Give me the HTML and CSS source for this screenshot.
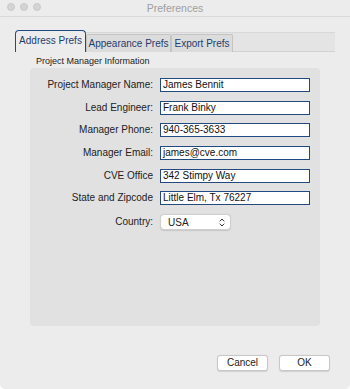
FILE: index.html
```html
<!DOCTYPE html>
<html>
<head>
<meta charset="utf-8">
<link rel="stylesheet" href="styles.css">
</head>
<body>
<div class="window">
  <div class="titlebar">
    <div class="lights"><span class="light"></span><span class="light"></span><span class="light"></span></div>
    <div class="title">Preferences</div>
  </div>
  <div class="tabstrip">
    <div class="tab active">Address Prefs</div>
    <div class="tab">Appearance Prefs</div>
    <div class="tab">Export Prefs</div>
  </div>
  <div class="section-label">Project Manager Information</div>
  <div class="group">
    <div class="form">
      <label class="lbl">Project Manager Name:</label><div class="field">James Bennit</div>
      <label class="lbl">Lead Engineer:</label><div class="field">Frank Binky</div>
      <label class="lbl">Manager Phone:</label><div class="field">940-365-3633</div>
      <label class="lbl">Manager Email:</label><div class="field">james@cve.com</div>
      <label class="lbl">CVE Office</label><div class="field">342 Stimpy Way</div>
      <label class="lbl">State and Zipcode</label><div class="field">Little Elm, Tx 76227</div>
      <label class="lbl">Country:</label>
      <div class="select"><span>USA</span>
        <svg class="chev" width="6" height="9" viewBox="0 0 6 9"><path d="M0.8 3.3 L3 1 L5.2 3.3 M0.8 5.7 L3 8 L5.2 5.7" fill="none" stroke="#333" stroke-width="1"/></svg>
      </div>
    </div>
  </div>
  <div class="buttons">
    <div class="btn">Cancel</div>
    <div class="btn">OK</div>
  </div>
</div>
</body>
</html>
```
FILE: styles.css
```css
html, body {
  margin: 0;
  padding: 0;
  background: #ffffff;
}
body {
  font-family: "Liberation Sans", Arial, sans-serif;
  color: #222;
}
.window {
  width: 350px;
  height: 389px;
  background: #ececec;
  border-radius: 0 0 5px 5px;
  box-sizing: border-box;
  overflow: hidden;
}
.titlebar {
  height: 16px;
  border-bottom: 1px solid #d9d9d9;
  position: relative;
  display: flex;
  align-items: center;
  justify-content: center;
}
.lights {
  position: absolute;
  left: 7px;
  top: 3px;
  display: flex;
  gap: 5px;
}
.light {
  width: 8px;
  height: 8px;
  border-radius: 50%;
  background: #d4d4d4;
  border: 0.5px solid #c8c8c8;
  box-sizing: border-box;
}
.title {
  font-size: 10.5px;
  color: #a0a0a0;
}
.tabstrip {
  margin: 15px 15px 0 15px;
  height: 20px;
  background: #e4e4e4;
  border-top: 1px solid #d8d8d8;
  border-bottom: 1px solid #d2d2d2;
  display: flex;
  align-items: flex-end;
  box-sizing: border-box;
}
.tab {
  font-size: 10px;
  color: #1f3d6d;
  height: 18px;
  line-height: 17px;
  background: #dcdcdc;
  border: 1px solid #c4c4c4;
  border-bottom: none;
  border-radius: 2px 2px 0 0;
  box-sizing: border-box;
  margin-bottom: -1px;
  white-space: nowrap;
  text-align: center;
}
.tab.active {
  height: 22px;
  line-height: 20px;
  width: 71px;
  background: #ececec;
  border: 1.5px solid #234a80;
  border-bottom: none;
  border-radius: 4px 4px 0 0;
}
.tab:nth-child(2) { width: 85px; }
.tab:nth-child(3) { width: 62px; }
.section-label {
  font-size: 9px;
  margin: 3px 0 0 36px;
  height: 13px;
  line-height: 12px;
  color: #222;
}
.group {
  margin: 0 30px;
  height: 258px;
  background: #e1e1e1;
  border-radius: 4px;
  box-sizing: border-box;
  padding-top: 10px;
}
.form {
  display: grid;
  grid-template-columns: 123px 150px;
  column-gap: 7px;
  row-gap: 8.7px;
  align-items: center;
}
.lbl {
  text-align: right;
  font-size: 10px;
  color: #222;
  line-height: 14px;
}
.field {
  height: 14px;
  border: 1.5px solid #234a80;
  background: #fff;
  box-sizing: border-box;
  font-size: 10px;
  line-height: 11px;
  padding-left: 2px;
  color: #111;
  white-space: nowrap;
}
.select {
  width: 71px;
  height: 16px;
  background: #fff;
  border: 1px solid #cfcfcf;
  border-radius: 4px;
  box-sizing: border-box;
  font-size: 10px;
  display: flex;
  align-items: center;
  justify-content: space-between;
  padding: 0 5px 0 7px;
  box-shadow: 0 0.5px 1px rgba(0,0,0,0.12);
}
.chev { display: block; }
.buttons {
  display: flex;
  justify-content: flex-end;
  gap: 11px;
  padding-right: 20px;
  margin-top: 29px;
}
.btn {
  width: 51px;
  height: 16px;
  background: #fff;
  border: 1px solid #c8c8c8;
  border-radius: 3px;
  box-sizing: border-box;
  font-size: 10px;
  line-height: 14px;
  text-align: center;
  color: #222;
  box-shadow: 0 0.5px 1px rgba(0,0,0,0.12);
}
```
